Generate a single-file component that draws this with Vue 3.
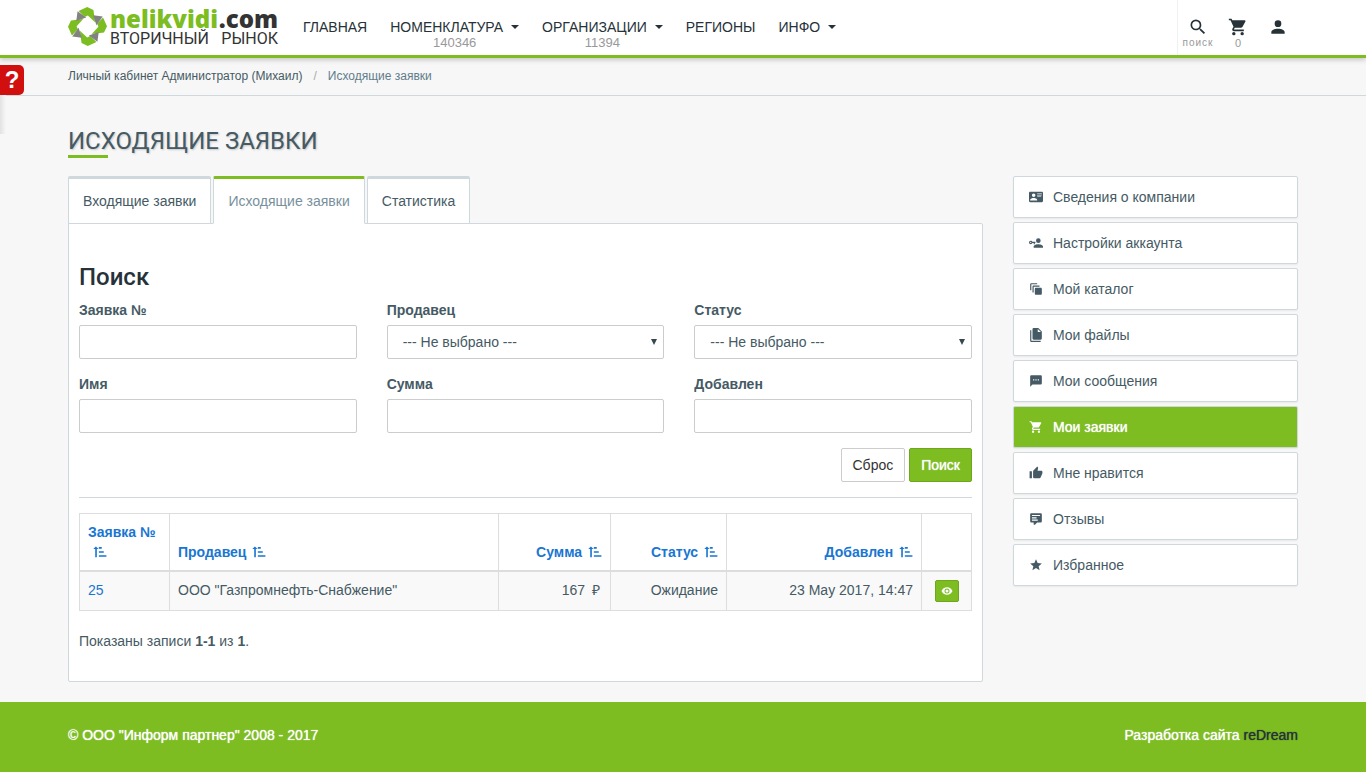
<script setup>
import { ref } from 'vue'

const icons = {
  search: 'M9.5,3A6.5,6.5 0 0,1 16,9.5C16,11.11 15.41,12.59 14.44,13.73L14.71,14H15.5L20.5,19L19,20.5L14,15.5V14.71L13.73,14.44C12.59,15.41 11.11,16 9.5,16A6.5,6.5 0 0,1 3,9.5A6.5,6.5 0 0,1 9.5,3M9.5,5C7,5 5,7 5,9.5C5,12 7,14 9.5,14C12,14 14,12 14,9.5C14,7 12,5 9.5,5Z',
  cart: 'M17,18C15.89,18 15,18.89 15,20A2,2 0 0,0 17,22A2,2 0 0,0 19,20C19,18.89 18.1,18 17,18M1,2V4H3L6.6,11.59L5.24,14.04C5.09,14.32 5,14.65 5,15A2,2 0 0,0 7,17H19V15H7.42A0.25,0.25 0 0,1 7.17,14.75C7.17,14.7 7.18,14.66 7.2,14.63L8.1,13H15.55C16.3,13 16.96,12.58 17.3,11.97L20.88,5.5C20.95,5.34 21,5.17 21,5A1,1 0 0,0 20,4H5.21L4.27,2M7,18C5.89,18 5,18.89 5,20A2,2 0 0,0 7,22A2,2 0 0,0 9,20C9,18.89 8.1,18 7,18Z',
  account: 'M12,4A4,4 0 0,1 16,8A4,4 0 0,1 12,12A4,4 0 0,1 8,8A4,4 0 0,1 12,4M12,14C16.42,14 20,15.79 20,18V20H4V18C4,15.79 7.58,14 12,14Z',
  card: 'M2,3H22C23.05,3 24,3.95 24,5V19C24,20.05 23.05,21 22,21H2C0.95,21 0,20.05 0,19V5C0,3.95 0.95,3 2,3M14,6V7H22V6H14M14,8V9H21.5L22,9V8H14M14,10V11H21V10H14M8,13.91C6,13.91 2,15 2,17V18H14V17C14,15 10,13.91 8,13.91M8,6A3,3 0 0,0 5,9A3,3 0 0,0 8,12A3,3 0 0,0 11,9A3,3 0 0,0 8,6Z',
  key: 'M11,10V12H10V14H8V12H5.83C5.42,13.17 4.31,14 3,14A3,3 0 0,1 0,11A3,3 0 0,1 3,8C4.31,8 5.42,8.83 5.83,10H11M3,10A1,1 0 0,0 2,11A1,1 0 0,0 3,12A1,1 0 0,0 4,11A1,1 0 0,0 3,10M16,14C18.67,14 24,15.34 24,18V20H8V18C8,15.34 13.33,14 16,14M16,12A4,4 0 0,1 12,8A4,4 0 0,1 16,4A4,4 0 0,1 20,8A4,4 0 0,1 16,12Z',
  catalog: 'M4,2C2.89,2 2,2.89 2,4V14H4V4H14V2H4M8,6C6.89,6 6,6.89 6,8V18H8V8H18V6H8M12,10C10.89,10 10,10.89 10,12V20C10,21.11 10.89,22 12,22H20C21.11,22 22,21.11 22,20V12C22,10.89 21.11,10 20,10H12Z',
  files: 'M15,7H20.5L15,1.5V7M8,0H16L22,6V18A2,2 0 0,1 20,20H8C6.89,20 6,19.1 6,18V2A2,2 0 0,1 8,0M4,4V22H20V24H4A2,2 0 0,1 2,22V4H4Z',
  message: 'M17,11H15V9H17M13,11H11V9H13M9,11H7V9H9M20,2H4A2,2 0 0,0 2,4V22L6,18H20A2,2 0 0,0 22,16V4C22,2.89 21.1,2 20,2Z',
  like: 'M23,10C23,8.89 22.1,8 21,8H14.68L15.64,3.43C15.66,3.33 15.67,3.22 15.67,3.11C15.67,2.7 15.5,2.32 15.23,2.05L14.17,1L7.59,7.58C7.22,7.95 7,8.45 7,9V19A2,2 0 0,0 9,21H18C18.83,21 19.54,20.5 19.84,19.78L22.86,12.73C22.95,12.5 23,12.26 23,12V10M1,21H5V9H1V21Z',
  comment: 'M9,22A1,1 0 0,1 8,21V18H4A2,2 0 0,1 2,16V4C2,2.89 2.9,2 4,2H20A2,2 0 0,1 22,4V16A2,2 0 0,1 20,18H13.9L10.2,21.71C10,21.9 9.75,22 9.5,22H9M5,5V7H19V5H5M5,9V11H13V9H5M5,13V15H15V13H5Z',
  star: 'M12,17.27L18.18,21L16.54,13.97L22,9.24L14.81,8.62L12,2L9.19,8.62L2,9.24L7.45,13.97L5.82,21L12,17.27Z',
  sort: 'M0.5,7L5,2.5L9.5,7H6.6V21H3.8V7ZM10,3.5H15V6.3H10ZM10,10.5H18.5V13.3H10ZM10,17.5H23V20.3H10Z',
  eye: 'M12,9A3,3 0 0,0 9,12A3,3 0 0,0 12,15A3,3 0 0,0 15,12A3,3 0 0,0 12,9M12,17A5,5 0 0,1 7,12A5,5 0 0,1 12,7A5,5 0 0,1 17,12A5,5 0 0,1 12,17M12,4.5C7,4.5 2.73,7.61 1,12C2.73,16.39 7,19.5 12,19.5C17,19.5 21.27,16.39 23,12C21.27,7.61 17,4.5 12,4.5Z',
}

const nav = [
  { label: 'ГЛАВНАЯ' },
  { label: 'НОМЕНКЛАТУРА', count: '140346', menu: true },
  { label: 'ОРГАНИЗАЦИИ', count: '11394', menu: true },
  { label: 'РЕГИОНЫ' },
  { label: 'ИНФО', menu: true },
]

const tabs = ['Входящие заявки', 'Исходящие заявки', 'Статистика']
const activeTab = ref(1)

const fields = [
  { id: 'number', label: 'Заявка №' },
  { id: 'seller', label: 'Продавец', select: true },
  { id: 'status', label: 'Статус', select: true },
  { id: 'name', label: 'Имя' },
  { id: 'sum', label: 'Сумма' },
  { id: 'added', label: 'Добавлен' },
]

const columns = [
  { label: 'Заявка №', cls: 'c-num' },
  { label: 'Продавец', cls: 'c-seller' },
  { label: 'Сумма', cls: 'c-sum right' },
  { label: 'Статус', cls: 'c-status right' },
  { label: 'Добавлен', cls: 'c-date right' },
]

const menu = [
  { icon: 'card', label: 'Сведения о компании' },
  { icon: 'key', label: 'Настройки аккаунта' },
  { icon: 'catalog', label: 'Мой каталог' },
  { icon: 'files', label: 'Мои файлы' },
  { icon: 'message', label: 'Мои сообщения' },
  { icon: 'cart', label: 'Мои заявки', active: true },
  { icon: 'like', label: 'Мне нравится' },
  { icon: 'comment', label: 'Отзывы' },
  { icon: 'star', label: 'Избранное' },
]
</script>

<template>
  <div class="page">
    <header class="header">
      <div class="container header-row">
        <a href="#" class="logo" aria-label="nelikvidi.com">
          <svg class="logo-mark" viewBox="0 0 118 118" aria-hidden="true">
            <g fill="#7cbd22">
              <path
                v-for="a in [0, 90, 180, 270]"
                :key="a"
                :transform="`rotate(${a} 59 59)`"
                d="M32 12 58 0 77 9 82 46 60 26 51 30Z"
              />
            </g>
            <g fill="#828282">
              <path
                v-for="a in [0, 90, 180, 270]"
                :key="a"
                :transform="`rotate(${a} 59 59)`"
                d="M29 13 55 32 25 42Z"
              />
            </g>
          </svg>
          <span class="logo-text">
            <span class="logo-name"><span class="green">nelikvidi</span><span>.com</span></span>
            <span class="logo-sub"><span>ВТОРИЧНЫЙ</span><span>РЫНОК</span></span>
          </span>
        </a>
        <nav class="nav">
          <a v-for="n in nav" :key="n.label" href="#" class="nav-item">
            <span class="nav-label">{{ n.label }}<i v-if="n.menu" class="caret"></i></span>
            <span v-if="n.count" class="nav-count">{{ n.count }}</span>
          </a>
        </nav>
        <div class="tools">
          <a href="#" class="tool">
            <svg class="icon-lg" viewBox="0 0 24 24"><path :d="icons.search" /></svg>
            <span class="tool-search">поиск</span>
          </a>
          <a href="#" class="tool" aria-label="Корзина">
            <svg class="icon-lg" viewBox="0 0 24 24"><path :d="icons.cart" /></svg>
            <span class="tool-count">0</span>
          </a>
          <a href="#" class="tool" aria-label="Профиль">
            <svg class="icon-lg" viewBox="0 0 24 24"><path :d="icons.account" /></svg>
          </a>
        </div>
      </div>
    </header>

    <button type="button" class="help">?</button>
    <div class="edge"></div>

    <div class="crumbs">
      <div class="container crumbs-row">
        <a href="#">Личный кабинет Администратор (Михаил)</a>
        <span class="sep">/</span>
        <span class="current">Исходящие заявки</span>
      </div>
    </div>

    <div class="container body">
      <h1 class="title">ИСХОДЯЩИЕ ЗАЯВКИ</h1>
      <div class="cols">
        <main class="main">
          <div class="tabs" role="tablist">
            <button
              v-for="(t, i) in tabs"
              :key="t"
              type="button"
              role="tab"
              class="tab"
              :class="{ active: i === activeTab }"
              :aria-selected="i === activeTab"
              @click="activeTab = i"
            >{{ t }}</button>
          </div>
          <section class="panel">
            <h2 class="subtitle">Поиск</h2>
            <form @submit.prevent>
              <div class="fields">
                <div v-for="f in fields" :key="f.id" class="field">
                  <label :for="f.id">{{ f.label }}</label>
                  <div v-if="f.select" class="select">
                    <select :id="f.id" class="control">
                      <option>--- Не выбрано ---</option>
                    </select>
                    <i class="arrow"></i>
                  </div>
                  <input v-else :id="f.id" type="text" class="control" />
                </div>
              </div>
              <div class="actions">
                <button type="reset" class="btn">Сброс</button>
                <button type="submit" class="btn primary">Поиск</button>
              </div>
            </form>
            <hr class="rule" />
            <table class="table">
              <thead>
                <tr>
                  <th v-for="c in columns" :key="c.label" :class="c.cls">
                    <a href="#">{{ c.label }} <svg class="sort" viewBox="0 0 24 24"><path :d="icons.sort" /></svg></a>
                  </th>
                  <th class="c-act"></th>
                </tr>
              </thead>
              <tbody>
                <tr>
                  <td><a href="#">25</a></td>
                  <td>ООО "Газпромнефть-Снабжение"</td>
                  <td class="right">167 <span class="rub">₽</span></td>
                  <td class="right">Ожидание</td>
                  <td class="right">23 May 2017, 14:47</td>
                  <td class="center">
                    <button type="button" class="view" aria-label="Просмотр">
                      <svg viewBox="0 0 24 24"><path :d="icons.eye" /></svg>
                    </button>
                  </td>
                </tr>
              </tbody>
            </table>
            <p class="summary">Показаны записи <b>1-1</b> из <b>1</b>.</p>
          </section>
        </main>
        <aside class="side">
          <a v-for="m in menu" :key="m.label" href="#" class="side-item" :class="{ active: m.active }">
            <svg class="side-icon" viewBox="0 0 24 24"><path :d="icons[m.icon]" /></svg>
            <span>{{ m.label }}</span>
          </a>
        </aside>
      </div>
    </div>

    <footer class="footer">
      <div class="container footer-row">
        <span>© ООО "Информ партнер" 2008 - 2017</span>
        <span>Разработка сайта <a href="#">reDream</a></span>
      </div>
    </footer>
  </div>
</template>

<style>
body {
  margin: 0;
  background: #f7f7f7;
}
</style>

<style scoped>
* {
  box-sizing: border-box;
}
.page {
  min-height: 100vh;
  display: flex;
  flex-direction: column;
  position: relative;
  font: 14px/20px "Liberation Sans", Arial, sans-serif;
  color: #455a64;
}
a {
  color: inherit;
  text-decoration: none;
}
svg {
  fill: currentColor;
}
button,
input,
select {
  font: inherit;
  color: inherit;
}
.container {
  width: 100%;
  max-width: 1260px;
  margin: 0 auto;
  padding: 0 15px;
}
.header {
  background: #fff;
  border-bottom: 3px solid #7dbd22;
  box-shadow: 0 2px 5px rgba(0, 0, 0, 0.2);
  position: relative;
}
.header-row {
  display: flex;
  height: 55px;
}
.logo {
  display: flex;
  gap: 3px;
  padding-top: 7px;
  color: #333;
}
.logo-mark {
  width: 39px;
  height: 39px;
}
.logo-text {
  display: flex;
  flex-direction: column;
  width: 168px;
}
.logo-name {
  display: flex;
  justify-content: space-between;
  font: 800 24px/24px "Open Sans", sans-serif;
}
.green {
  color: #7cbd22;
}
.logo-sub {
  display: flex;
  justify-content: space-between;
  font: 16px/16px Roboto, sans-serif;
}
.nav {
  display: flex;
  gap: 23px;
  margin-left: 25px;
  padding-top: 17px;
  color: #263238;
}
.nav-item {
  display: flex;
  flex-direction: column;
  align-items: center;
}
.nav-label {
  display: flex;
  align-items: center;
}
.caret {
  margin-left: 8px;
  border: 4px solid transparent;
  border-top-color: currentColor;
  border-bottom: 0;
}
.nav-count {
  font-size: 13px;
  line-height: 12px;
  color: #999;
}
.tools {
  display: flex;
  gap: 20px;
  margin-left: auto;
  padding: 17px 10px 0 10px;
  border-left: 1px solid #f0f0f0;
  color: #263238;
}
.tool {
  display: flex;
  flex-direction: column;
  align-items: center;
  width: 20px;
}
.icon-lg {
  width: 20px;
  height: 20px;
  flex: none;
}
.tool-search {
  font-size: 10px;
  line-height: 12px;
  letter-spacing: 1px;
  color: #999;
}
.tool-count {
  font-size: 11px;
  line-height: 12px;
  color: #999;
}
.help {
  position: absolute;
  left: 0;
  top: 65px;
  width: 24px;
  height: 30px;
  padding: 0;
  border: 0;
  border-radius: 0 5px 5px 0;
  background: #d20f0f;
  color: #fff;
  font: bold 24px/30px "Liberation Sans", Arial, sans-serif;
}
.edge {
  position: absolute;
  left: 0;
  top: 95px;
  width: 6px;
  height: 39px;
  background: linear-gradient(to right, #e2e2e2, #f7f7f7);
}
.crumbs {
  border-bottom: 1px solid #cfd8dc;
  font-size: 12px;
}
.crumbs-row {
  display: flex;
  padding-top: 8px;
  padding-bottom: 9px;
}
.sep {
  padding: 0 11px;
  color: #aaa;
}
.current {
  color: #607d8b;
}
.body {
  flex: 1;
  padding-bottom: 20px;
}
.title {
  position: relative;
  margin: 30px 0 18px;
  padding-bottom: 2px;
  font: 400 24px/30px Roboto, sans-serif;
  color: #455a64;
  text-shadow: 1px 1px 2px rgba(0, 0, 0, 0.2);
}
.title::after {
  content: "";
  position: absolute;
  left: 0;
  bottom: 0;
  width: 40px;
  height: 3px;
  background: #7dbd22;
}
.cols {
  display: grid;
  grid-template-columns: minmax(0, 1fr) 285px;
  gap: 30px;
  align-items: start;
}
.tabs {
  display: flex;
  gap: 2px;
}
.tab {
  height: 48px;
  margin-bottom: -1px;
  padding: 0 14px;
  border: 1px solid #cfd8dc;
  border-top-width: 3px;
  border-radius: 2px 2px 0 0;
  background: #fff;
}
.tab.active {
  position: relative;
  border-top-color: #7dbd22;
  border-bottom-color: #fff;
  color: #78909c;
}
.panel {
  padding: 40px 10px 30px;
  border: 1px solid #cfd8dc;
  border-radius: 0 2px 2px 2px;
  background: #fff;
}
.subtitle {
  margin: 0 0 10px;
  font: 500 24px/26px Roboto, sans-serif;
  color: #263238;
}
.fields {
  display: grid;
  grid-template-columns: repeat(3, minmax(0, 1fr));
  gap: 15px 30px;
}
.field label {
  display: block;
  margin-bottom: 5px;
  font-weight: bold;
}
.select {
  position: relative;
}
.control {
  display: block;
  width: 100%;
  height: 34px;
  padding: 6px 15px;
  border: 1px solid #ccc;
  border-radius: 2px;
  background: #fff;
  appearance: none;
}
.arrow {
  position: absolute;
  right: 7px;
  top: 14px;
  border: 3px solid transparent;
  border-top: 6px solid #37474f;
  border-bottom: 0;
}
.actions {
  display: flex;
  justify-content: flex-end;
  gap: 4px;
  margin-top: 15px;
}
.btn {
  height: 34px;
  padding: 0 11px;
  border: 1px solid #ccc;
  border-radius: 2px;
  background: #fff;
  color: #333;
}
.btn.primary {
  border-color: #6ea71e;
  background: #7dbd22;
  color: #fff;
  text-shadow: 0 0 1px #fff;
}
.rule {
  margin: 15px 0;
  border: 0;
  border-top: 1px solid #cfd8dc;
}
.table {
  width: 100%;
  border-collapse: collapse;
  table-layout: fixed;
}
th,
td {
  padding: 8px;
  border: 1px solid #ddd;
  text-align: left;
}
th {
  border-bottom-width: 2px;
  vertical-align: bottom;
  color: #1976d2;
}
td {
  height: 39px;
  vertical-align: top;
}
td a {
  color: #1976d2;
}
tbody tr {
  background: #f9f9f9;
}
.c-num {
  width: 90px;
}
.c-sum {
  width: 112px;
}
.c-status {
  width: 116px;
}
.c-date {
  width: 195px;
}
.c-act {
  width: 50px;
}
.right {
  text-align: right;
}
.center {
  text-align: center;
}
.sort {
  width: 14px;
  height: 14px;
  margin-left: 5px;
  vertical-align: -2px;
}
.c-seller .sort,
.right .sort {
  margin-left: 2px;
}
.rub {
  padding: 0 2px 0 3px;
}
.view {
  display: inline-flex;
  align-items: center;
  justify-content: center;
  width: 24px;
  height: 22px;
  padding: 0;
  border: 1px solid #6ea71e;
  border-radius: 2px;
  background: #7dbd22;
  color: #fff;
  vertical-align: top;
}
.view svg {
  width: 12px;
  height: 12px;
}
.summary {
  margin: 20px 0 0;
}
.side {
  display: flex;
  flex-direction: column;
  gap: 4px;
}
.side-item {
  display: flex;
  align-items: center;
  gap: 10px;
  height: 42px;
  padding: 0 15px;
  border: 1px solid #cfd8dc;
  border-radius: 2px;
  background: #fff;
  box-shadow: 0 1px 2px rgba(0, 0, 0, 0.06);
}
.side-item.active {
  background: #7dbd22;
  color: #fff;
  text-shadow: 0 0 1px #fff;
}
.side-icon {
  width: 14px;
  height: 14px;
  flex: none;
}
.footer {
  background: #7dbd22;
  color: #fff;
  text-shadow: 0 0 1px currentColor;
}
.footer-row {
  display: flex;
  justify-content: space-between;
  padding-top: 23px;
  padding-bottom: 27px;
}
.footer a {
  color: #263238;
}
</style>
